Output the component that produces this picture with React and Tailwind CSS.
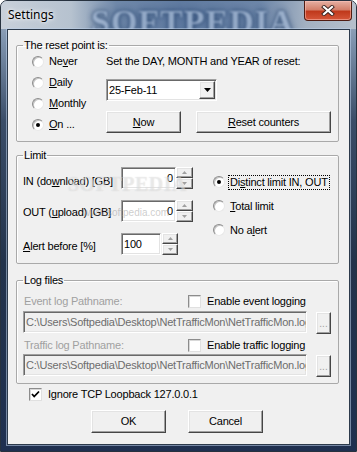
import React from 'react'

const raised =
  'bg-[#f0f0f0] border border-t-white border-l-white border-r-[#454545] border-b-[#454545] shadow-[inset_-1px_-1px_0_#a0a0a0,inset_1px_1px_0_#e3e3e3]'
const sunken =
  'border border-t-[#a0a0a0] border-l-[#a0a0a0] border-b-white border-r-white shadow-[inset_1px_1px_0_#696969,inset_-1px_-1px_0_#e3e3e3]'
const group = 'border border-[#a9a9a9] rounded-[2px] shadow-[inset_1px_1px_0_#ffffff]'

const PATH = 'C:\\Users\\Softpedia\\Desktop\\NetTrafficMon\\NetTrafficMon.log'

function Radio({ checked, focus, children }) {
  return (
    <div className="flex items-center gap-[5px]">
      <span className="flex items-center justify-center w-[12px] h-[12px] rounded-full bg-white border border-t-[#8c8c8c] border-l-[#8c8c8c] border-r-[#e8e8e8] border-b-[#e8e8e8] shadow-[inset_1px_1px_0_#c4c4c4]">
        {checked && <span className="w-[4px] h-[4px] rounded-full bg-black" />}
      </span>
      {focus ? (
        <span className="-ml-[2px] px-[1px] border border-dotted border-black leading-[13px]">{children}</span>
      ) : (
        <span className="leading-[13px]">{children}</span>
      )}
    </div>
  )
}

function Check({ checked }) {
  return (
    <span className="flex items-center justify-center w-[13px] h-[13px] bg-white border border-t-[#8c8c8c] border-l-[#8c8c8c] border-r-[#e0e0e0] border-b-[#e0e0e0] shadow-[inset_1px_1px_0_#d8d8d8]">
      {checked && (
        <svg width="9" height="9" viewBox="0 0 9 9">
          <polyline points="1,4 3.2,6.5 8,1.5" fill="none" stroke="#000" strokeWidth="1.8" />
        </svg>
      )}
    </span>
  )
}

function UpDown({ className }) {
  const half = 'flex-1 flex items-center justify-center ' + raised
  return (
    <div className={'flex flex-col h-[22px] ' + className}>
      <div className={half}>
        <svg width="5" height="3" viewBox="0 0 5 3"><polygon points="0,3 5,3 2.5,0" fill="#a0a0a0" /></svg>
      </div>
      <div className={half}>
        <svg width="5" height="3" viewBox="0 0 5 3"><polygon points="0,0 5,0 2.5,3" fill="#a0a0a0" /></svg>
      </div>
    </div>
  )
}

function Button({ className, children }) {
  return (
    <div className={'flex items-center justify-center h-[22px] ' + raised + ' ' + className}>
      {children}
    </div>
  )
}

function Browse() {
  return (
    <div className={'ml-[9px] mt-[1px] w-[15px] h-[22px] flex justify-center items-end pb-[4px] text-[#a0a0a0] text-[10px] leading-[10px] tracking-normal ' + raised}>
      ...
    </div>
  )
}

export default function App() {
  return (
    <div className="w-[357px] h-[452px] overflow-hidden rounded-t-[7px] border border-[#27323f] bg-[linear-gradient(to_bottom,#aab8c9_0px,#7e93ad_40px,#3a4d68_120px,#23334b_260px,#1f3050_452px)] font-['Liberation_Sans',Arial,sans-serif] text-[11px] tracking-[-0.2px] text-black">
      {/* Title bar */}
      <div className="relative flex justify-between h-[28px] bg-[linear-gradient(to_right,#c8d0da_0px,#b6c2cf_70px,#6f88a9_115px,#5f7aa0_180px,#6d86a8_260px,#a3b1c2_305px,#b6c0cc_357px)]">
        <div className="absolute left-[90px] top-[-5px] font-['Liberation_Serif',serif] font-bold text-[34px] tracking-[1px] text-[#9fb4d0] [text-shadow:0_0_3px_#1d3b66,0_0_6px_#1d3b66] opacity-80 blur-[1.2px] pointer-events-none">
          SOFTPEDIA
        </div>
        <div className="relative pl-[7px] flex items-center font-['Noto_Sans',sans-serif] text-[12px] tracking-normal text-black [text-shadow:0_0_6px_#fff,0_0_3px_#fff]">
          Settings
        </div>
        <div className="relative mr-[4px] w-[48px] h-[20px] flex items-center justify-center rounded-b-[4px] border border-t-0 border-[#501c12] bg-[linear-gradient(to_bottom,#e5b0a3_0%,#d3806b_45%,#c0391c_55%,#d5563a_100%)] shadow-[inset_0_0_0_1px_rgba(255,200,190,0.5)]">
          <svg width="14" height="11" viewBox="0 0 14 11">
            <path d="M3 2 L11 9 M11 2 L3 9" stroke="#3a2320" strokeWidth="4" strokeLinecap="square" />
            <path d="M3 2 L11 9 M11 2 L3 9" stroke="#ffffff" strokeWidth="2.2" strokeLinecap="square" />
          </svg>
        </div>
      </div>

      {/* Frame + client */}
      <div className="px-[6px] pb-[6px]">
        <div className="relative w-[343px] h-[416px] border border-[#2c3a4b] bg-[#f0f0f0] shadow-[0_0_0_1px_rgba(190,210,235,0.55)]">
          {/* The reset point */}
          <fieldset className={'ml-[8px] mt-[9px] w-[323px] h-[103px] ' + group}>
            <legend className="ml-[6px] px-[1px] leading-[12px]">The reset point is:</legend>
            <div className="flex">
              <div className="w-[89px] pl-[15px] flex flex-col">
                <div className="h-[21px] flex items-center"><Radio>Ne<u>v</u>er</Radio></div>
                <div className="h-[21px] flex items-center"><Radio><u>D</u>aily</Radio></div>
                <div className="h-[21px] flex items-center"><Radio><u>M</u>onthly</Radio></div>
                <div className="h-[21px] flex items-center"><Radio checked><u>O</u>n ...</Radio></div>
              </div>
              <div className="flex flex-col">
                <div className="h-[21px] flex items-center">Set the DAY, MONTH and YEAR of reset:</div>
                <div className={'mt-[7px] w-[111px] h-[22px] flex items-center bg-white ' + sunken}>
                  <span className="flex-1 pl-[2px]">25-Feb-11</span>
                  <div className={'w-[16px] h-[18px] mr-[1px] flex items-center justify-center ' + raised}>
                    <svg width="7" height="4" viewBox="0 0 7 4"><polygon points="0,0 7,0 3.5,4" fill="#000" /></svg>
                  </div>
                </div>
                <div className="mt-[10px] flex gap-[15px]">
                  <Button className="w-[75px]"><u>N</u>ow</Button>
                  <Button className="w-[135px]"><u>R</u>eset counters</Button>
                </div>
              </div>
            </div>
          </fieldset>

          {/* Limit */}
          <fieldset className={'ml-[8px] mt-[7px] w-[323px] h-[115px] ' + group}>
            <legend className="ml-[6px] px-[1px] leading-[12px]">Limit</legend>
            <div className="flex">
              <div className="pl-[6px] pt-[6px] flex flex-col gap-[11px]">
                <div className="flex h-[22px]">
                  <span className="w-[98px] pt-[8px] leading-[13px]">IN (do<u>w</u>nload) [GB]</span>
                  <div className={'w-[55px] h-[22px] bg-white flex items-center justify-end pr-[2px] ' + sunken}>0</div>
                  <UpDown className="w-[17px]" />
                </div>
                <div className="flex h-[22px]">
                  <span className="w-[98px] pt-[6px] leading-[13px]">OUT (<u>u</u>pload) [GB]</span>
                  <div className={'w-[55px] h-[22px] bg-white flex items-center justify-end pr-[2px] ' + sunken}>0</div>
                  <UpDown className="w-[17px]" />
                </div>
                <div className="flex h-[22px]">
                  <span className="w-[98px] pt-[7px] leading-[13px]"><u>A</u>lert before [%]</span>
                  <div className={'w-[40px] h-[22px] bg-white flex items-center pl-[2px] ' + sunken}>100</div>
                  <UpDown className="w-[16px] ml-[1px]" />
                </div>
              </div>
              <div className="ml-[20px] pt-[9px] flex flex-col">
                <div className="h-[24px] flex items-center"><Radio checked focus>Di<u>s</u>tinct limit IN, OUT</Radio></div>
                <div className="h-[24px] flex items-center"><Radio><u>T</u>otal limit</Radio></div>
                <div className="h-[24px] flex items-center"><Radio>No a<u>l</u>ert</Radio></div>
              </div>
            </div>
          </fieldset>

          {/* Log files */}
          <fieldset className={'ml-[8px] mt-[10px] w-[323px] h-[110px] ' + group}>
            <legend className="ml-[6px] px-[1px] leading-[12px]">Log files</legend>
            <div className="pl-[6px] flex flex-col">
              <div className="mt-[8px] h-[14px] flex items-center">
                <span className="w-[165px] pl-[1px] text-[#a0a0a0]">Event log Pathname:</span>
                <Check />
                <span className="ml-[6px]">Enable event logging</span>
              </div>
              <div className="mt-[3px] flex">
                <div className={'w-[284px] h-[22px] flex items-center pl-[2px] overflow-hidden whitespace-nowrap text-[#6d6d6d] ' + sunken}>{PATH}</div>
                <Browse />
              </div>
              <div className="mt-[4px] h-[14px] flex items-center">
                <span className="w-[165px] pl-[1px] text-[#a0a0a0]">Traffic log Pathname:</span>
                <Check />
                <span className="ml-[6px]">Enable traffic logging</span>
              </div>
              <div className="mt-[2px] flex">
                <div className={'w-[284px] h-[22px] flex items-center pl-[2px] overflow-hidden whitespace-nowrap text-[#6d6d6d] ' + sunken}>{PATH}</div>
                <Browse />
              </div>
            </div>
          </fieldset>

          <div className="mt-[3px] pl-[21px] h-[14px] flex items-center">
            <Check checked />
            <span className="ml-[6px]">Ignore TCP Loopback 127.0.0.1</span>
          </div>

          <div className="mt-[9px] pl-[83px] flex gap-[22px]">
            <Button className="w-[75px] h-[23px]">OK</Button>
            <Button className="w-[75px] h-[23px]">Cancel</Button>
          </div>

          {/* watermark */}
          <div className="absolute left-[60px] top-[142px] font-['Liberation_Serif',serif] font-bold text-[20px] leading-[24px] tracking-[0.5px] text-white/40 [text-shadow:0_0_1px_rgba(150,150,150,0.35)] pointer-events-none">
            SOFTPEDIA
          </div>
          <div className="absolute left-[75px] top-[175px] text-[10px] tracking-normal text-[#9a9a9a]/50 pointer-events-none">
            www.softpedia.com
          </div>
        </div>
      </div>
    </div>
  )
}
